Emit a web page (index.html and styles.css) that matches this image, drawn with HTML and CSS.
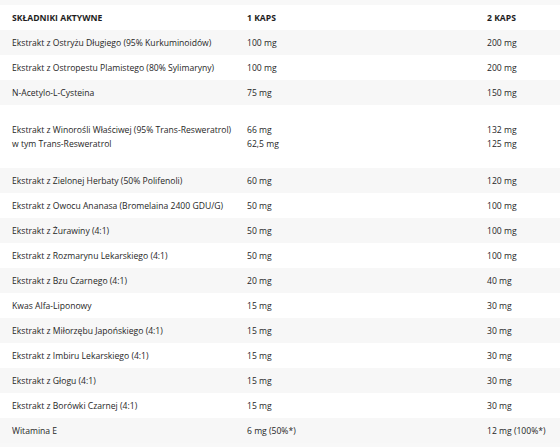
FILE: index.html
```html
<!DOCTYPE html>
<html lang="pl">
<head>
<meta charset="utf-8">
<link rel="stylesheet" href="styles.css">
</head>
<body>
<div class="table">
  <div class="row head"><div>SKŁADNIKI AKTYWNE</div><div>1 KAPS</div><div>2 KAPS</div></div>
  <div class="row alt"><div>Ekstrakt z Ostryżu Długiego (95% Kurkuminoidów)</div><div>100 mg</div><div>200 mg</div></div>
  <div class="row"><div>Ekstrakt z Ostropestu Plamistego (80% Sylimaryny)</div><div>100 mg</div><div>200 mg</div></div>
  <div class="row alt"><div>N-Acetylo-L-Cysteina</div><div>75 mg</div><div>150 mg</div></div>
  <div class="row tall"><div>Ekstrakt z Winorośli Właściwej (95% Trans-Resweratrol)<br>w tym Trans-Resweratrol</div><div>66 mg<br>62,5 mg</div><div>132 mg<br>125 mg</div></div>
  <div class="row alt"><div>Ekstrakt z Zielonej Herbaty (50% Polifenoli)</div><div>60 mg</div><div>120 mg</div></div>
  <div class="row"><div>Ekstrakt z Owocu Ananasa (Bromelaina 2400 GDU/G)</div><div>50 mg</div><div>100 mg</div></div>
  <div class="row alt"><div>Ekstrakt z Żurawiny (4:1)</div><div>50 mg</div><div>100 mg</div></div>
  <div class="row"><div>Ekstrakt z Rozmarynu Lekarskiego (4:1)</div><div>50 mg</div><div>100 mg</div></div>
  <div class="row alt"><div>Ekstrakt z Bzu Czarnego (4:1)</div><div>20 mg</div><div>40 mg</div></div>
  <div class="row"><div>Kwas Alfa-Liponowy</div><div>15 mg</div><div>30 mg</div></div>
  <div class="row alt"><div>Ekstrakt z Miłorzębu Japońskiego (4:1)</div><div>15 mg</div><div>30 mg</div></div>
  <div class="row"><div>Ekstrakt z Imbiru Lekarskiego (4:1)</div><div>15 mg</div><div>30 mg</div></div>
  <div class="row alt"><div>Ekstrakt z Głogu (4:1)</div><div>15 mg</div><div>30 mg</div></div>
  <div class="row"><div>Ekstrakt z Borówki Czarnej (4:1)</div><div>15 mg</div><div>30 mg</div></div>
  <div class="row alt"><div>Witamina E</div><div>6 mg (50%*)</div><div>12 mg (100%*)</div></div>
</div>
</body>
</html>
```
FILE: styles.css
```css
html, body {
  margin: 0;
  padding: 0;
  background: #f8f8f8;
}
body {
  padding-top: 5px;
  font-family: "Open Sans", "DejaVu Sans", sans-serif;
  font-size: 8.6px;
  color: #262626;
}
.table {
  display: flex;
  flex-direction: column;
}
.row {
  display: grid;
  grid-template-columns: 235px 240px 1fr;
  align-items: center;
  height: 25px;
  padding-left: 12px;
  background: #fff;
  line-height: 14px;
}
.row.alt {
  background: #f7f7f7;
}
.row.tall {
  height: 63px;
}
.head {
  font-weight: 700;
  color: #1e1e1e;
}
```
